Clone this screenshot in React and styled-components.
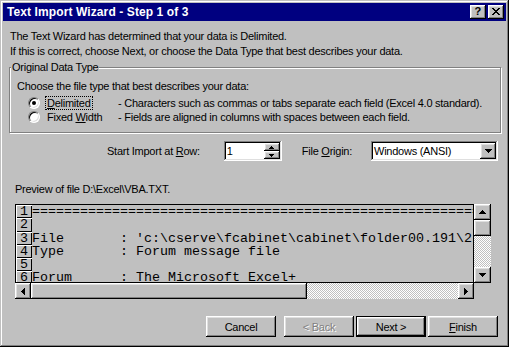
import React from 'react';
import styled, { createGlobalStyle } from 'styled-components';

const Global = createGlobalStyle`
  html, body { margin: 0; padding: 0; background: #c0c0c0; }
  * { box-sizing: border-box; }
`;

const raised = `box-shadow: inset -1px -1px #000, inset 1px 1px #fff, inset -2px -2px #808080, inset 2px 2px #dfdfdf;`;
const sunken = `box-shadow: inset -1px -1px #fff, inset 1px 1px #808080, inset -2px -2px #dfdfdf, inset 2px 2px #000;`;

const Window = styled.div`
  width: 509px;
  height: 347px;
  background: #c0c0c0;
  padding: 3px;
  box-shadow: inset -1px -1px #000, inset 1px 1px #c0c0c0, inset -2px -2px #808080, inset 2px 2px #fff;
  display: flex;
  flex-direction: column;
  font-family: "Liberation Sans", Arial, sans-serif;
  font-size: 11px;
  letter-spacing: -0.25px;
  color: #000;
`;

const TitleBar = styled.div`
  height: 18px;
  flex-shrink: 0;
  background: #000080;
  color: #fff;
  display: flex;
  align-items: center;
  padding: 0 2px 0 4px;
  font-weight: bold;
  font-size: 12px;
  letter-spacing: 0.1px;
`;

const Title = styled.span`
  flex: 1;
`;

const CapButtons = styled.div`
  display: flex;
  gap: 2px;
`;

const CapButton = styled.div`
  width: 16px;
  height: 14px;
  background: #c0c0c0;
  ${raised}
  display: flex;
  align-items: center;
  justify-content: center;
  color: #000;
  font-size: 11px;
  font-weight: bold;
  line-height: 1;
  padding-bottom: 1px;
`;

const Body = styled.div`
  flex: 1;
  display: flex;
  flex-direction: column;
  padding: 0 5px 0 6px;
`;

const Intro = styled.div`
  margin-top: 8px;
  padding-left: 1px;
  line-height: 15px;
`;

const Group = styled.div`
  position: relative;
  margin-top: 8px;
  width: 492px;
  border: 1px solid #808080;
  box-shadow: inset 1px 1px #fff, 1px 1px #fff;
  padding: 11px 7px 8px 7px;
`;

const GroupLabel = styled.span`
  position: absolute;
  top: -8px;
  left: 1px;
  padding: 0 1px;
  background: #c0c0c0;
  line-height: 14px;
`;

const Line = styled.div`
  line-height: 14px;
`;

const RadioGrid = styled.div`
  margin-top: 3px;
  padding-left: 11px;
  display: grid;
  grid-template-columns: 12px 66px auto;
  column-gap: 5px;
  row-gap: 0;
  align-items: center;
`;

const Radio = styled.span`
  width: 12px;
  height: 12px;
  border-radius: 50%;
  background: #fff;
  border: 1px solid;
  border-color: #808080 #fff #fff #808080;
  box-shadow: inset 1px 1px #000, inset -1px -1px #dfdfdf;
  display: flex;
  align-items: center;
  justify-content: center;
  &::after {
    content: '';
    width: 4px;
    height: 4px;
    border-radius: 50%;
    background: #000;
    display: ${p => (p.$checked ? 'block' : 'none')};
  }
`;

const RadioLabel = styled.span`
  height: 14px;
  line-height: 12px;
  padding: 0 1px;
  border: 1px dotted ${p => (p.$focus ? '#000' : 'transparent')};
  justify-self: start;
`;

const Desc = styled.span`
  line-height: 14px;
  padding-left: 2px;
`;

const U = styled.span`
  text-decoration: underline;
  text-underline-offset: 1px;
`;

const OptionsRow = styled.div`
  margin-top: 8px;
  display: flex;
  align-items: center;
  padding-left: 98px;
  height: 20px;
`;

const FieldLabel = styled.span`
  margin-right: ${p => p.$gap}px;
`;

const SpinBox = styled.div`
  width: 58px;
  height: 20px;
  background: #fff;
  ${sunken}
  padding: 2px;
  display: flex;
  margin-right: 20px;
`;

const FieldText = styled.span`
  flex: 1;
  padding-left: 1px;
  line-height: 16px;
`;

const SpinButtons = styled.div`
  width: 16px;
  display: flex;
  flex-direction: column;
`;

const SmallButton = styled.div`
  flex: 1;
  background: #c0c0c0;
  ${raised}
  display: flex;
  align-items: center;
  justify-content: center;
`;

const Combo = styled.div`
  width: 127px;
  height: 20px;
  background: #fff;
  ${sunken}
  padding: 2px;
  display: flex;
`;

const ComboButton = styled.div`
  width: 16px;
  height: 16px;
  background: #c0c0c0;
  ${raised}
  display: flex;
  align-items: center;
  justify-content: center;
`;

const PreviewLabel = styled.div`
  margin-top: 21px;
  padding-left: 6px;
  line-height: 14px;
`;

const PreviewGrid = styled.div`
  margin-top: 8px;
  margin-left: 6px;
  display: grid;
  grid-template-columns: 459px 17px;
  grid-template-rows: 79px 16px;
`;

const TextBox = styled.div`
  border: 1px solid #000;
  overflow: hidden;
  display: flex;
  flex-direction: column;
  font-family: "Liberation Mono", "Courier New", monospace;
  font-size: 13.33px;
  letter-spacing: 0;
`;

const PRow = styled.div`
  display: flex;
  height: 13.3px;
  flex-shrink: 0;
  overflow: hidden;
`;

const RowNum = styled.div`
  width: 16px;
  flex-shrink: 0;
  background: #c0c0c0;
  box-shadow: inset 1px 1px #fff, inset -1px -1px #000;
  text-align: center;
  line-height: 13.3px;
`;

const RowText = styled.div`
  white-space: pre;
  line-height: 13.3px;
`;

const ScrollBar = styled.div`
  display: flex;
  flex-direction: ${p => (p.$vertical ? 'column' : 'row')};
`;

const ArrowButton = styled.div`
  flex-shrink: 0;
  width: ${p => (p.$vertical ? '17px' : '16px')};
  height: 16px;
  background: #c0c0c0;
  ${raised}
  display: flex;
  align-items: center;
  justify-content: center;
`;

const Thumb = styled.div`
  flex-shrink: 0;
  width: ${p => p.$w};
  height: ${p => p.$h};
  background: #c0c0c0;
  ${raised}
`;

const Track = styled.div`
  flex: 1;
  background: repeating-conic-gradient(#fff 0 25%, #c0c0c0 0 50%) 0 0 / 2px 2px;
`;

const Corner = styled.div`
  background: #c0c0c0;
`;

const ButtonRow = styled.div`
  margin-top: 17px;
  display: flex;
  justify-content: flex-end;
  padding-right: 3px;
`;

const Button = styled.button`
  width: 70px;
  height: 21px;
  margin-left: ${p => p.$gap}px;
  padding: 0;
  background: #c0c0c0;
  font-family: "Liberation Sans", Arial, sans-serif;
  font-size: 11px;
  letter-spacing: -0.25px;
  color: ${p => (p.disabled ? '#808080' : '#000')};
  text-shadow: ${p => (p.disabled ? '1px 1px #fff' : 'none')};
  border: ${p => (p.$default ? '1px solid #000' : 'none')};
  ${raised}
`;

const Arrow = ({ dir, size = 7 }) => {
  const s = size;
  const h = Math.ceil(s / 2);
  const rects = [];
  for (let i = 0; i < h; i++) {
    const len = 1 + i * 2;
    const off = h - 1 - i;
    rects.push(`M${off} ${i}h${len}v1h-${len}z`);
  }
  const d = rects.join(' ');
  let transform = '';
  let w = s;
  let hh = h;
  if (dir === 'down') transform = `rotate(180 ${s / 2} ${h / 2})`;
  if (dir === 'left' || dir === 'right') {
    w = h;
    hh = s;
  }
  if (dir === 'left') transform = `translate(0 ${s}) rotate(-90)`;
  if (dir === 'right') transform = `translate(${h} 0) rotate(90)`;
  return (
    <svg width={w} height={hh} viewBox={`0 0 ${w} ${hh}`} shapeRendering="crispEdges">
      <path d={d} fill="#000" transform={transform} />
    </svg>
  );
};

const CloseGlyph = () => (
  <svg width="8" height="7" viewBox="0 0 8 7" shapeRendering="crispEdges">
    <path
      fill="#000"
      d="M0 0h2v1h-2z M6 0h2v1h-2z M1 1h2v1h-2z M5 1h2v1h-2z M2 2h4v1h-4z M3 3h2v1h-2z M2 4h4v1h-4z M1 5h2v1h-2z M5 5h2v1h-2z M0 6h2v1h-2z M6 6h2v1h-2z"
    />
  </svg>
);

const previewLines = [
  '='.repeat(60),
  '',
  "File       : 'c:\\cserve\\fcabinet\\cabinet\\folder00.191\\2",
  'Type       : Forum message file',
  '',
  'Forum      : The Microsoft Excel+',
];

export default function App() {
  return (
    <>
      <Global />
      <Window>
        <TitleBar>
          <Title>Text Import Wizard - Step 1 of 3</Title>
          <CapButtons>
            <CapButton>?</CapButton>
            <CapButton>
              <CloseGlyph />
            </CapButton>
          </CapButtons>
        </TitleBar>
        <Body>
          <Intro>
            The Text Wizard has determined that your data is Delimited.
            <br />
            If this is correct, choose Next, or choose the Data Type that best describes your data.
          </Intro>
          <Group>
            <GroupLabel>Original Data Type</GroupLabel>
            <Line>Choose the file type that best describes your data:</Line>
            <RadioGrid>
              <Radio $checked />
              <RadioLabel $focus>
                <U>D</U>elimited
              </RadioLabel>
              <Desc>- Characters such as commas or tabs separate each field (Excel 4.0 standard).</Desc>
              <Radio />
              <RadioLabel>
                Fixed <U>W</U>idth
              </RadioLabel>
              <Desc>- Fields are aligned in columns with spaces between each field.</Desc>
            </RadioGrid>
          </Group>
          <OptionsRow>
            <FieldLabel $gap={24}>
              Start Import at <U>R</U>ow:
            </FieldLabel>
            <SpinBox>
              <FieldText>1</FieldText>
              <SpinButtons>
                <SmallButton>
                  <Arrow dir="up" size={5} />
                </SmallButton>
                <SmallButton>
                  <Arrow dir="down" size={5} />
                </SmallButton>
              </SpinButtons>
            </SpinBox>
            <FieldLabel $gap={19}>
              File <U>O</U>rigin:
            </FieldLabel>
            <Combo>
              <FieldText>Windows (ANSI)</FieldText>
              <ComboButton>
                <Arrow dir="down" size={7} />
              </ComboButton>
            </Combo>
          </OptionsRow>
          <PreviewLabel>Preview of file D:\Excel\VBA.TXT.</PreviewLabel>
          <PreviewGrid>
            <TextBox>
              {previewLines.map((line, i) => (
                <PRow key={i}>
                  <RowNum>{i + 1}</RowNum>
                  <RowText>{line}</RowText>
                </PRow>
              ))}
            </TextBox>
            <ScrollBar $vertical>
              <ArrowButton $vertical>
                <Arrow dir="up" />
              </ArrowButton>
              <Thumb $w="17px" $h="16px" />
              <Track />
              <ArrowButton $vertical>
                <Arrow dir="down" />
              </ArrowButton>
            </ScrollBar>
            <ScrollBar>
              <ArrowButton>
                <Arrow dir="left" />
              </ArrowButton>
              <Thumb $w="276px" $h="16px" />
              <Track />
              <ArrowButton>
                <Arrow dir="right" />
              </ArrowButton>
            </ScrollBar>
            <Corner />
          </PreviewGrid>
          <ButtonRow>
            <Button $gap={0}>Cancel</Button>
            <Button $gap={8} disabled>
              &lt; Back
            </Button>
            <Button $gap={2} $default>
              Next &gt;
            </Button>
            <Button $gap={2}>
              <U>F</U>inish
            </Button>
          </ButtonRow>
        </Body>
      </Window>
    </>
  );
}
